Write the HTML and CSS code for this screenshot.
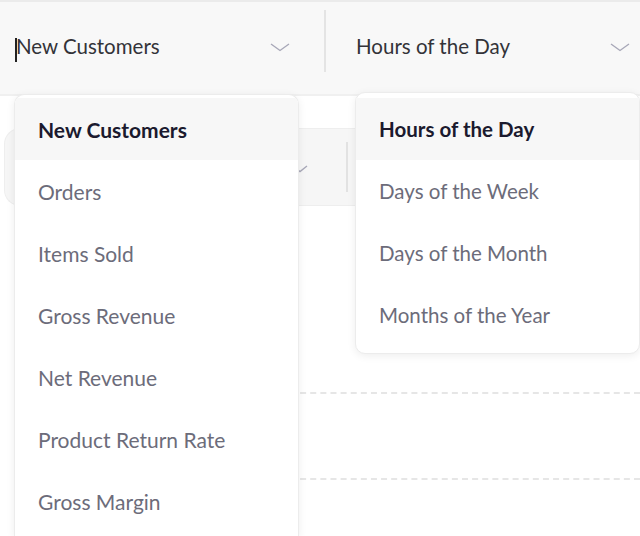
FILE: index.html
```html
<!DOCTYPE html>
<html>
<head>
<meta charset="utf-8">
<link rel="stylesheet" href="styles.css">
</head>
<body>
<div class="topline"></div>
<div class="header">
  <div class="select select-left">
    <span class="caret"></span><span class="value">New Customers</span>
    <svg class="chev" width="20" height="9" viewBox="0 0 20 9"><path d="M1 1 L10 7.5 L19 1" fill="none" stroke="#a8a8b8" stroke-width="1.4"/></svg>
  </div>
  <div class="sep"></div>
  <div class="select select-right">
    <span class="value">Hours of the Day</span>
    <svg class="chev" width="20" height="9" viewBox="0 0 20 9"><path d="M1 1 L10 7.5 L19 1" fill="none" stroke="#a8a8b8" stroke-width="1.4"/></svg>
  </div>
</div>
<div class="content">
  <div class="row2">
    <div class="row2-left">
      <svg class="chev" width="16" height="8" viewBox="0 0 16 8"><path d="M1 1 L8 6.5 L15 1" fill="none" stroke="#a8a8b8" stroke-width="1.4"/></svg>
    </div>
    <div class="row2-sep"></div>
  </div>
  <div class="grid">
    <div class="gridline first"></div>
    <div class="gridline"></div>
  </div>
</div>

<div class="menu menu-left">
  <div class="item active">New Customers</div>
  <div class="item">Orders</div>
  <div class="item">Items Sold</div>
  <div class="item">Gross Revenue</div>
  <div class="item">Net Revenue</div>
  <div class="item">Product Return Rate</div>
  <div class="item">Gross Margin</div>
</div>

<div class="menu menu-right">
  <div class="item active">Hours of the Day</div>
  <div class="item">Days of the Week</div>
  <div class="item">Days of the Month</div>
  <div class="item">Months of the Year</div>
</div>
</body>
</html>
```
FILE: styles.css
```css
html, body {
  margin: 0;
  padding: 0;
  background: #ffffff;
  font-family: Lato, "Open Sans", sans-serif;
  overflow: hidden;
  height: 536px;
}
.topline {
  height: 2px;
  background: #ebebeb;
}
.header {
  height: 92px;
  background: #f8f8f8;
  border-bottom: 2px solid #f0f0f0;
  display: flex;
  align-items: center;
}
.select {
  display: flex;
  align-items: center;
  height: 100%;
  padding-bottom: 4px;
  box-sizing: border-box;
  font-size: 20.5px;
  color: #333338;
}
.select-left {
  width: 324px;
  padding-left: 16px;
  padding-right: 34px;
  position: relative;
}
.select-right {
  flex: 1;
  padding-left: 30px;
  padding-right: 10px;
}
.select .value {
  flex: 1;
}
.select .chev {
  margin-top: 2px;
}
.caret {
  position: absolute;
  left: 15px;
  top: 36px;
  width: 2px;
  height: 24px;
  background: #222;
}
.sep {
  width: 2px;
  height: 62px;
  margin-top: -14px;
  background: #e4e4e4;
}
.content {
  padding-top: 32px;
}
.row2 {
  margin-left: 4px;
  height: 76px;
  background: #f6f6f6;
  border: 1px solid #eeeeee;
  border-right: none;
  border-radius: 16px 0 0 16px;
  display: flex;
  align-items: center;
}
.row2-left {
  width: 341px;
  display: flex;
  justify-content: flex-end;
  padding-right: 38px;
  padding-top: 4px;
  box-sizing: border-box;
}
.row2-sep {
  width: 2px;
  height: 50px;
  background: #e2e2e2;
}
.grid {
  padding-top: 186px;
}
.gridline {
  height: 0;
  border-top: 2px dashed #e6e6e6;
  margin-left: 290px;
}
.gridline.first {
  margin-bottom: 84px;
}
.menu {
  position: absolute;
  background: #ffffff;
  border: 1px solid #ececec;
  border-radius: 10px;
  box-shadow: 0 2px 8px rgba(0, 0, 0, 0.07);
  box-sizing: border-box;
}
.menu-left {
  left: 14px;
  top: 94px;
  width: 285px;
  height: 442px;
  padding-top: 3px;
  border-bottom: none;
  border-radius: 10px 10px 0 0;
  overflow: hidden;
}
.menu-right {
  left: 355px;
  top: 92px;
  width: 285px;
  padding: 5px 0 7px;
}
.menu-right .item {
  font-size: 20.5px;
}
.item {
  height: 62px;
  display: flex;
  align-items: center;
  padding-left: 23px;
  font-size: 21px;
  color: #6c6c7a;
}
.item.active {
  background: #f7f7f7;
  font-weight: bold;
  color: #1b1a2e;
}
```
